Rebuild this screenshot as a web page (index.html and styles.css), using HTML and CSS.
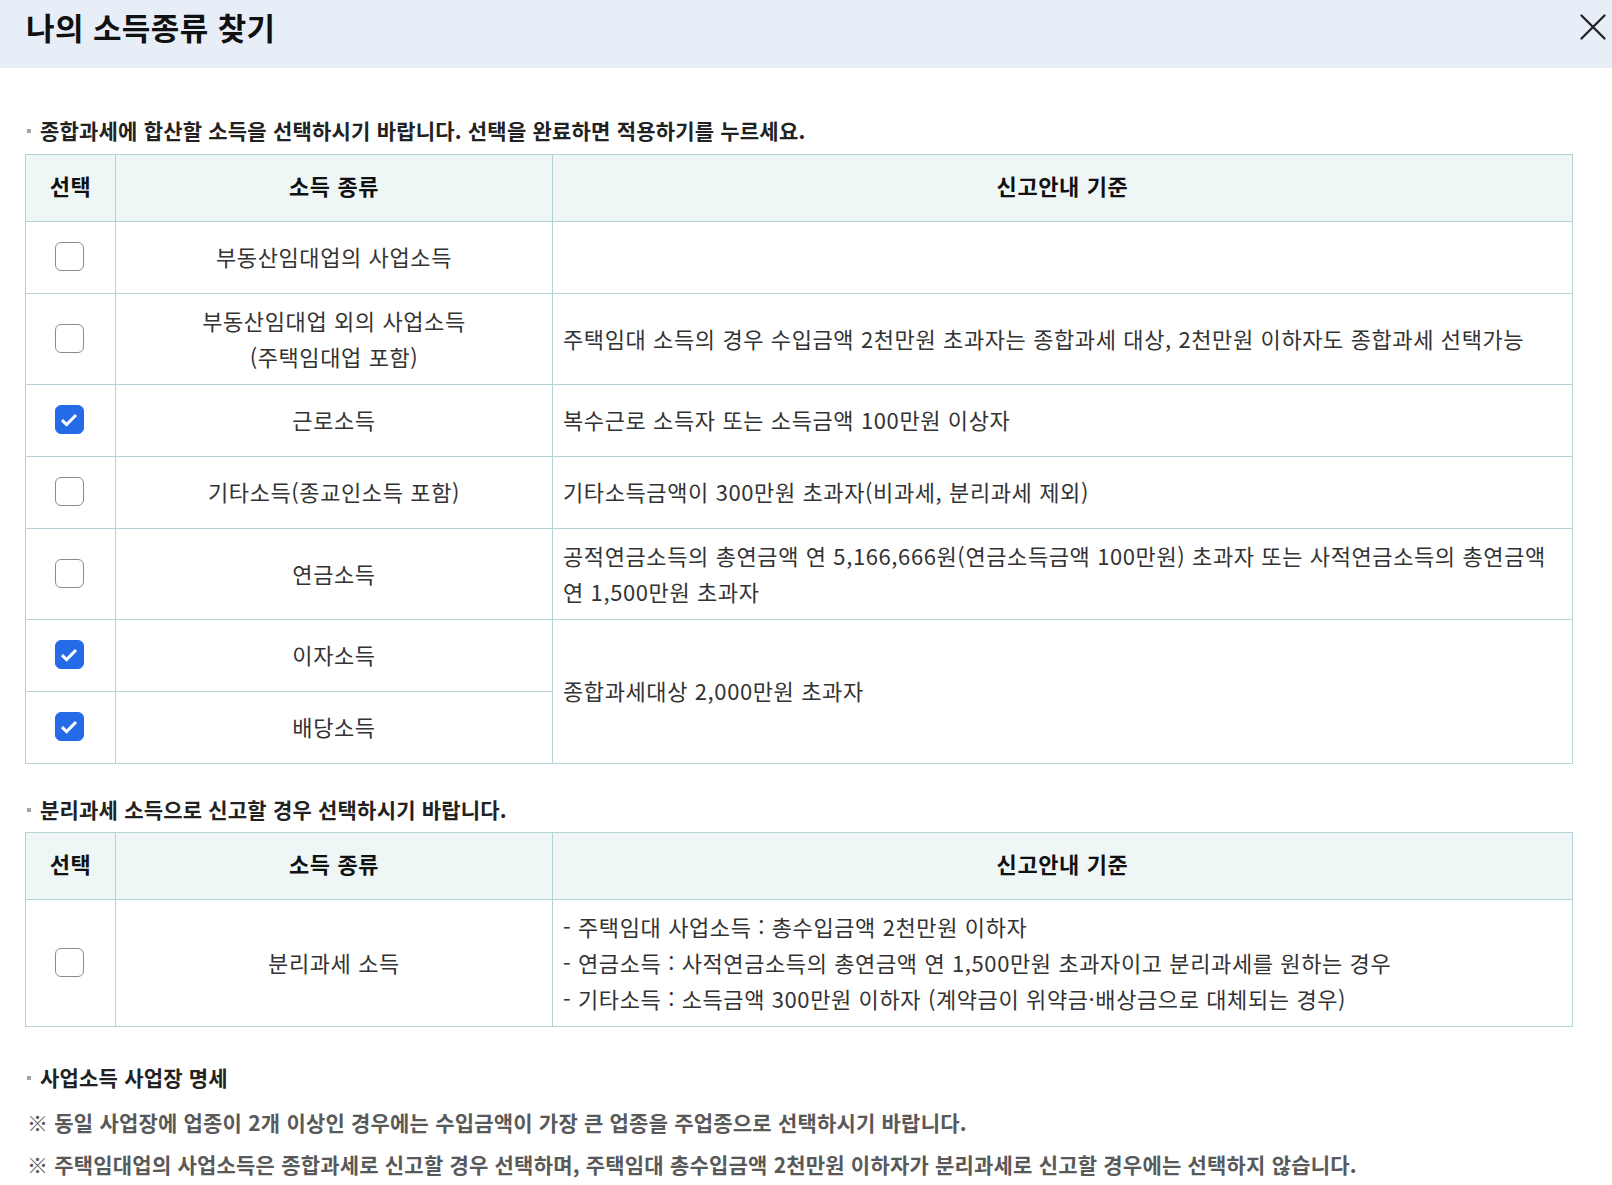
FILE: index.html
```html
<!DOCTYPE html>
<html lang="ko">
<head>
    <meta charset="UTF-8">
    <title>나의 소득종류 찾기</title>

    <link rel="stylesheet" href="styles.css">
</head>
<body>
<div class="modal">
  <div class="modal-head">
    <h1 class="modal-title">나의 소득종류 찾기</h1>
    <button class="modal-close" type="button" aria-label="닫기">
      <svg width="26" height="26" viewBox="0 0 26 26">
        <path d="M1.5 1.5 L24.5 24.5 M24.5 1.5 L1.5 24.5" stroke="#222" stroke-width="2.3" stroke-linecap="round" fill="none"/>
      </svg>
    </button>
  </div>

  <div class="modal-body">
    <p class="section-label">종합과세에 합산할 소득을 선택하시기 바랍니다. 선택을 완료하면 적용하기를 누르세요.</p>
    <table class="income-table">
      <colgroup>
        <col class="col-check">
        <col class="col-type">
        <col>
      </colgroup>
      <thead>
        <tr>
          <th>선택</th>
          <th>소득 종류</th>
          <th>신고안내 기준</th>
        </tr>
      </thead>
      <tbody>
        <tr class="row">
          <td class="cell-check"><span class="check"></span></td>
          <td class="cell-type">부동산임대업의 사업소득</td>
          <td class="cell-desc"></td>
        </tr>
        <tr class="row is--tall">
          <td class="cell-check"><span class="check"></span></td>
          <td class="cell-type">부동산임대업 외의 사업소득<br>(주택임대업 포함)</td>
          <td class="cell-desc">주택임대 소득의 경우 수입금액 2천만원 초과자는 종합과세 대상, 2천만원 이하자도 종합과세 선택가능</td>
        </tr>
        <tr class="row">
          <td class="cell-check"><span class="check is--on"><svg width="18" height="14" viewBox="0 0 18 14"><path d="M2 7.2 L6.6 11.6 L16 2" stroke="#fff" stroke-width="3" fill="none"/></svg></span></td>
          <td class="cell-type">근로소득</td>
          <td class="cell-desc">복수근로 소득자 또는 소득금액 100만원 이상자</td>
        </tr>
        <tr class="row">
          <td class="cell-check"><span class="check"></span></td>
          <td class="cell-type">기타소득(종교인소득 포함)</td>
          <td class="cell-desc">기타소득금액이 300만원 초과자(비과세, 분리과세 제외)</td>
        </tr>
        <tr class="row is--tall">
          <td class="cell-check"><span class="check"></span></td>
          <td class="cell-type">연금소득</td>
          <td class="cell-desc">공적연금소득의 총연금액 연 5,166,666원(연금소득금액 100만원) 초과자 또는 사적연금소득의 총연금액 연 1,500만원 초과자</td>
        </tr>
        <tr class="row">
          <td class="cell-check"><span class="check is--on"><svg width="18" height="14" viewBox="0 0 18 14"><path d="M2 7.2 L6.6 11.6 L16 2" stroke="#fff" stroke-width="3" fill="none"/></svg></span></td>
          <td class="cell-type">이자소득</td>
          <td class="cell-desc" rowspan="2">종합과세대상 2,000만원 초과자</td>
        </tr>
        <tr class="row">
          <td class="cell-check"><span class="check is--on"><svg width="18" height="14" viewBox="0 0 18 14"><path d="M2 7.2 L6.6 11.6 L16 2" stroke="#fff" stroke-width="3" fill="none"/></svg></span></td>
          <td class="cell-type">배당소득</td>
        </tr>
      </tbody>
    </table>

    <p class="section-label is--spaced">분리과세 소득으로 신고할 경우 선택하시기 바랍니다.</p>
    <table class="income-table">
      <colgroup>
        <col class="col-check">
        <col class="col-type">
        <col>
      </colgroup>
      <thead>
        <tr>
          <th>선택</th>
          <th>소득 종류</th>
          <th>신고안내 기준</th>
        </tr>
      </thead>
      <tbody>
        <tr class="row is--list">
          <td class="cell-check"><span class="check"></span></td>
          <td class="cell-type">분리과세 소득</td>
          <td class="cell-desc">
            - 주택임대 사업소득 : 총수입금액 2천만원 이하자<br>
            - 연금소득 : 사적연금소득의 총연금액 연 1,500만원 초과자이고 분리과세를 원하는 경우<br>
            - 기타소득 : 소득금액 300만원 이하자 (계약금이 위약금·배상금으로 대체되는 경우)
          </td>
        </tr>
      </tbody>
    </table>

    <p class="section-label is--last">사업소득 사업장 명세</p>
    <ul class="notes">
      <li>※ 동일 사업장에 업종이 2개 이상인 경우에는 수입금액이 가장 큰 업종을 주업종으로 선택하시기 바랍니다.</li>
      <li>※ 주택임대업의 사업소득은 종합과세로 신고할 경우 선택하며, 주택임대 총수입금액 2천만원 이하자가 분리과세로 신고할 경우에는 선택하지 않습니다.</li>
    </ul>
  </div>
</div>
</body>
</html>
```

FILE: styles.css
```css
body {
  margin: 0;
  padding: 0;
  background: #fff;
  font-family: "Noto Sans CJK KR", "Noto Sans", sans-serif;
  color: #333;
}

.modal {
  width: 1612px;
}

.modal-head {
  display: flex;
  justify-content: space-between;
  align-items: flex-start;
  height: 68px;
  background: #e7eef8;
}

.modal-title {
  margin: 0;
  padding: 7px 0 0 26px;
  font-size: 31px;
  line-height: 40px;
  font-weight: 700;
  letter-spacing: 0.4px;
  color: #111;
}

.modal-close {
  margin: 14px 6px 0 0;
  padding: 0;
  border: 0;
  background: none;
  width: 26px;
  height: 26px;
  line-height: 0;
}

.modal-body {
  padding: 47px 39px 40px 25px;
}

.section-label {
  margin: 0 0 9px 2px;
  font-size: 21px;
  line-height: 30px;
  font-weight: 700;
  letter-spacing: 0.2px;
  color: #222;
}

.section-label::before {
  content: "";
  display: inline-block;
  width: 4px;
  height: 4px;
  margin: 0 9px 0 0;
  background: #a5a5a5;
  vertical-align: 6px;
}

.section-label.is--spaced {
  margin-top: 30px;
  margin-bottom: 8px;
}

.section-label.is--last {
  margin-top: 35px;
  margin-bottom: 0;
}

.income-table {
  width: 100%;
  border-collapse: collapse;
  table-layout: fixed;
  font-size: 22px;
  letter-spacing: 0.6px;
}

.col-check {
  width: 90px;
}

.col-type {
  width: 437px;
}

.income-table th,
.income-table td {
  border: 1px solid #b3d3d6;
  padding: 0 0 3px;
}

.income-table th {
  height: 60px;
  padding-bottom: 6px;
  background: #eef7f6;
  font-weight: 700;
  color: #111;
}

.row td {
  height: 68px;
  line-height: 36px;
}

.row.is--tall td {
  height: 87px;
}

.row.is--list td {
  height: 123px;
}

.cell-check {
  text-align: center;
  padding-right: 3px !important;
}

.cell-type {
  text-align: center;
}

.cell-desc {
  padding: 0 10px 3px !important;
}

.check {
  display: inline-flex;
  align-items: center;
  justify-content: center;
  box-sizing: border-box;
  width: 29px;
  height: 29px;
  border: 1.5px solid #8c8c8c;
  border-radius: 6px;
  background: #fff;
  vertical-align: middle;
  margin-top: -7px;
}

.check.is--on {
  border-color: #256be9;
  background: #256be9;
}

.notes {
  margin: 9px 0 0 2px;
  padding: 0;
  list-style: none;
  font-size: 21px;
  line-height: 42px;
  font-weight: 700;
  letter-spacing: 0.2px;
  color: #595959;
}
```
